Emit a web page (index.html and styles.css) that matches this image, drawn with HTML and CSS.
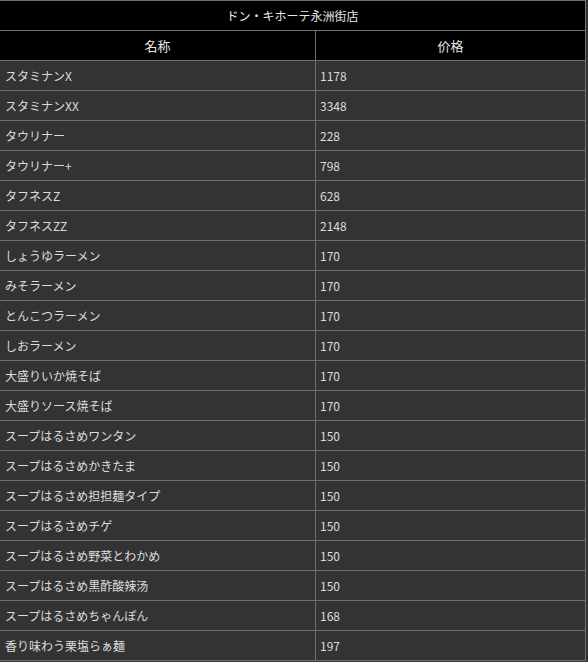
FILE: index.html
```html
<!DOCTYPE html>
<html lang="ja">
<head>
<meta charset="utf-8">
<title>ドン・キホーテ永洲街店</title>
<link rel="stylesheet" href="styles.css">
</head>
<body>
<table class="menu">
  <colgroup><col class="col-name"><col class="col-price"></colgroup>
  <thead>
    <tr><th class="title" colspan="2">ドン・キホーテ永洲街店</th></tr>
    <tr><th class="head">名称</th><th class="head">价格</th></tr>
  </thead>
  <tbody>
    <tr><td class="name">スタミナンX</td><td class="price">1178</td></tr>
    <tr><td class="name">スタミナンXX</td><td class="price">3348</td></tr>
    <tr><td class="name">タウリナー</td><td class="price">228</td></tr>
    <tr><td class="name">タウリナー+</td><td class="price">798</td></tr>
    <tr><td class="name">タフネスZ</td><td class="price">628</td></tr>
    <tr><td class="name">タフネスZZ</td><td class="price">2148</td></tr>
    <tr><td class="name">しょうゆラーメン</td><td class="price">170</td></tr>
    <tr><td class="name">みそラーメン</td><td class="price">170</td></tr>
    <tr><td class="name">とんこつラーメン</td><td class="price">170</td></tr>
    <tr><td class="name">しおラーメン</td><td class="price">170</td></tr>
    <tr><td class="name">大盛りいか焼そば</td><td class="price">170</td></tr>
    <tr><td class="name">大盛りソース焼そば</td><td class="price">170</td></tr>
    <tr><td class="name">スープはるさめワンタン</td><td class="price">150</td></tr>
    <tr><td class="name">スープはるさめかきたま</td><td class="price">150</td></tr>
    <tr><td class="name">スープはるさめ担担麺タイプ</td><td class="price">150</td></tr>
    <tr><td class="name">スープはるさめチゲ</td><td class="price">150</td></tr>
    <tr><td class="name">スープはるさめ野菜とわかめ</td><td class="price">150</td></tr>
    <tr><td class="name">スープはるさめ黒酢酸辣汤</td><td class="price">150</td></tr>
    <tr><td class="name">スープはるさめちゃんぽん</td><td class="price">168</td></tr>
    <tr><td class="name">香り味わう栗塩らぁ麺</td><td class="price">197</td></tr>
  </tbody>
</table>
</body>
</html>
```

FILE: styles.css
```css
html, body {
  margin: 0;
  padding: 0;
  background: #333333;
}

.menu {
  border-collapse: separate;
  border-spacing: 0;
  table-layout: fixed;
  width: 586px;
  border-top: 1px solid #707070;
  font-family: "Noto Sans CJK JP", "Liberation Sans", sans-serif;
  font-size: 12px;
  color: #dcdcdc;
}

.col-name { width: 316px; }
.col-price { width: 270px; }

.menu th,
.menu td {
  box-sizing: border-box;
  height: 30px;
  padding: 0;
  border-bottom: 1px solid #707070;
  border-right: 1px solid #707070;
  vertical-align: middle;
  line-height: 14px;
  white-space: nowrap;
}

.title,
.head {
  background: #000000;
  font-weight: normal;
  text-align: center;
  color: #e6e6e6;
}

.head {
  font-size: 13px;
}

.name,
.price {
  background: #333333;
  text-align: left;
}

.name { padding-left: 5px !important; }
.price { padding-left: 4px !important; }
```
